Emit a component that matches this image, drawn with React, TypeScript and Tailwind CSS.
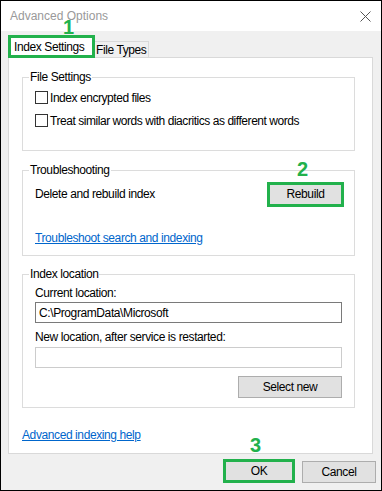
import type { ReactNode } from 'react';

const font = { fontFamily: '"Liberation Sans", Arial, sans-serif' };

function GroupBox({ title, className, children }: { title: string; className: string; children: ReactNode }) {
  return (
    <fieldset className={`border border-[#dcdcdc] p-0 m-0 ${className}`}>
      <legend className="ml-[6px] px-[1px] text-[12px] leading-[14px] tracking-[-0.4px] text-black">{title}</legend>
      <div className="pl-[12px] pr-[12px]">{children}</div>
    </fieldset>
  );
}

function CheckRow({ label }: { label: string }) {
  return (
    <label className="flex items-center h-[23px] gap-[2px] text-[12px] tracking-[-0.45px] text-black">
      <span className="w-[13px] h-[13px] border border-[#333333] bg-white shrink-0" />
      <span>{label}</span>
    </label>
  );
}

function WinButton({ label, className }: { label: string; className: string }) {
  return (
    <button className={`bg-[#e1e1e1] border border-[#adadad] text-[12px] tracking-[-0.4px] text-black flex items-center justify-center ${className}`}>
      {label}
    </button>
  );
}

function Marker({ n, className }: { n: string; className: string }) {
  return (
    <span className={`absolute text-[20px] leading-[20px] font-bold text-[#22b14c] ${className}`}>{n}</span>
  );
}

export default function App() {
  return (
    <div
      className="relative w-[382px] h-[491px] border border-black bg-[#f0f0f0] flex flex-col overflow-hidden"
      style={font}
    >
      {/* title bar */}
      <div className="h-[30px] bg-white flex items-center justify-between pl-[9px] pr-[9px] shrink-0">
        <span className="text-[12px] text-[#999999]">Advanced Options</span>
        <svg width="11" height="11" viewBox="0 0 11 11" className="mr-[1px]">
          <path d="M0.5 0.5 L10.5 10.5 M10.5 0.5 L0.5 10.5" stroke="#555555" strokeWidth="1" />
        </svg>
      </div>

      {/* tabs */}
      <div className="flex items-end pl-[7px] pt-[4px] shrink-0">
        <div className="relative z-10 w-[87px] h-[23px] bg-white border-[3px] border-[#22b14c] flex items-center pl-[3px] text-[12px] tracking-[-0.4px] text-black whitespace-nowrap">
          Index Settings
        </div>
        <div className="h-[17px] w-[54px] bg-[#f0f0f0] border border-b-0 border-l-0 border-[#d9d9d9] flex items-center pl-[1px] text-[12px] tracking-[-0.4px] text-black whitespace-nowrap">
          File Types
        </div>
      </div>

      {/* tab panel */}
      <div className="mt-[-1px] ml-[7px] w-[365px] h-[397px] bg-white border border-[#d9d9d9] px-[13px] shrink-0 flex flex-col text-[12px] tracking-[-0.4px] text-black">
        <GroupBox title="File Settings" className="mt-[12px] w-[333px]">
          <div className="pt-[2px] pb-[18px]">
            <CheckRow label="Index encrypted files" />
            <CheckRow label="Treat similar words with diacritics as different words" />
          </div>
        </GroupBox>

        <GroupBox title="Troubleshooting" className="mt-[12px] w-[333px]">
          <div className="pt-[5px] pb-[9px]">
            <div className="flex items-center justify-between h-[24px]">
              <span>Delete and rebuild index</span>
              <button className="mr-[-2px] w-[77px] h-[25px] border-[3px] border-[#22b14c] bg-[#e1e1e1] text-[12px] tracking-[-0.4px] text-black">
                Rebuild
              </button>
            </div>
            <a className="block mt-[25px] leading-[15px] text-[#0066cc] underline w-fit">
              Troubleshoot search and indexing
            </a>
          </div>
        </GroupBox>

        <GroupBox title="Index location" className="mt-[11px] w-[333px]">
          <div className="pt-[5px] pb-[9px] flex flex-col">
            <span className="leading-[15px]">Current location:</span>
            <div className="mt-[1px] w-[307px] h-[21px] border border-[#7a7a7a] bg-white flex items-center pl-[3px]">
              C:\ProgramData\Microsoft
            </div>
            <span className="mt-[7px] leading-[15px]">New location, after service is restarted:</span>
            <div className="mt-[2px] w-[307px] h-[21px] border border-[#cccccc] bg-white" />
            <div className="mt-[8px] flex justify-end w-[307px]">
              <WinButton label="Select new" className="w-[104px] h-[22px]" />
            </div>
          </div>
        </GroupBox>

        <a className="block mt-[20px] leading-[15px] text-[#0066cc] underline w-fit">
          Advanced indexing help
        </a>
      </div>

      {/* dialog buttons */}
      <div className="flex justify-end items-end gap-[7px] pr-[5px] pt-[5px]">
        <button className="w-[72px] h-[24px] border-[3px] border-[#22b14c] bg-[#e1e1e1] text-[12px] tracking-[-0.4px] text-black">
          OK
        </button>
        <WinButton label="Cancel" className="w-[74px] h-[22px]" />
      </div>

      <Marker n="1" className="left-[62px] top-[16px]" />
      <Marker n="2" className="left-[296px] top-[158px]" />
      <Marker n="3" className="left-[249px] top-[434px]" />
    </div>
  );
}
